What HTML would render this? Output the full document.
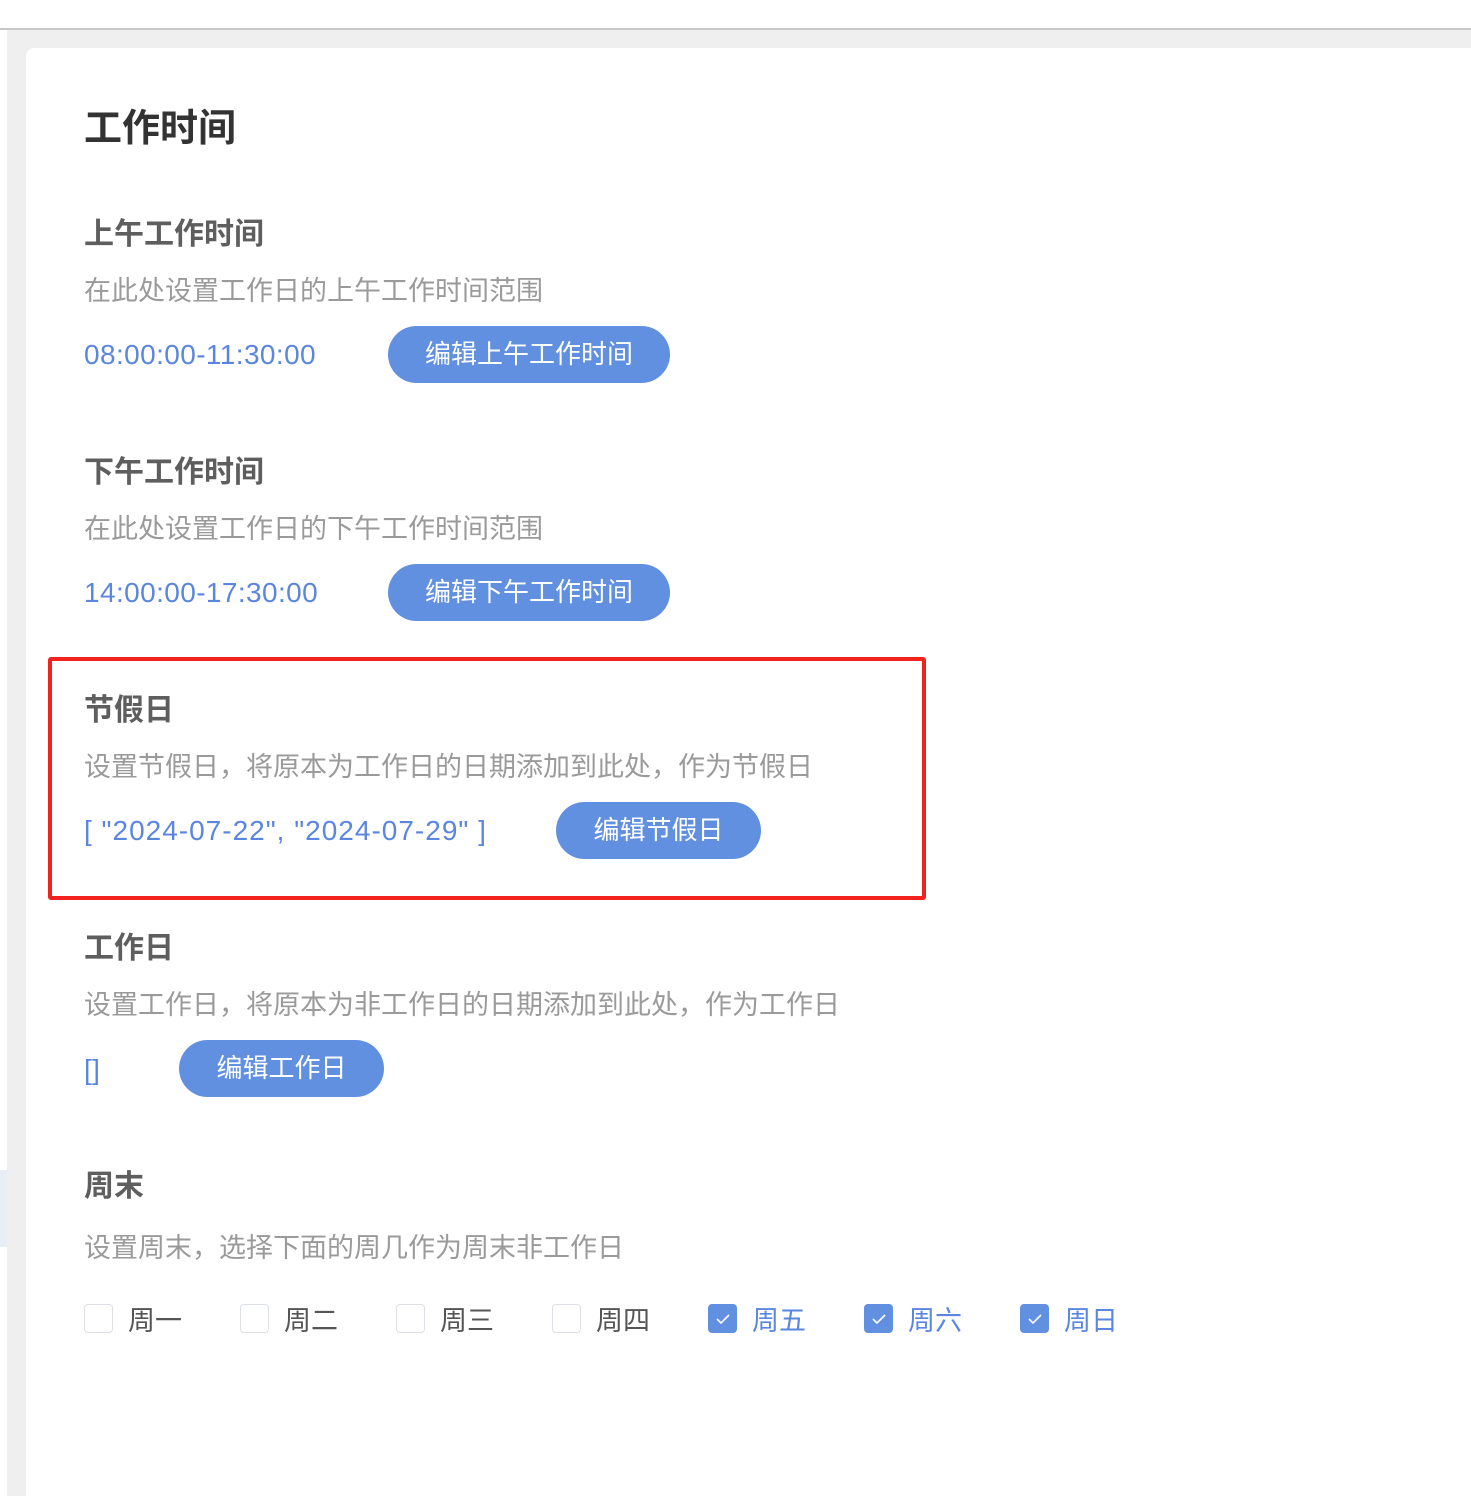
<!DOCTYPE html>
<html><head><meta charset="utf-8">
<style>
*{margin:0;padding:0;box-sizing:border-box}
body{width:1471px;height:1496px;position:relative;background:#fff;overflow:hidden;font-family:"Liberation Sans","Noto Sans CJK SC",sans-serif}
.topline{position:absolute;left:0;top:28px;width:1471px;height:2px;background:#c8c8c8}
.bg{position:absolute;left:7px;top:30px;width:1464px;height:1466px;background:#efefef}
.lstrip{position:absolute;left:0;top:1170px;width:7px;height:77px;background:#e9eef6}
.card{position:absolute;left:26px;top:48px;width:1460px;height:1460px;background:#fff;border-radius:8px}
.t{position:absolute;left:84px;white-space:nowrap}
.title{font-size:38px;font-weight:bold;color:#333;line-height:50px}
.h{font-size:30px;font-weight:bold;color:#5e5e5e;line-height:40px}
.d{font-size:27px;color:#9a9a9a;line-height:36px}
.v{font-size:28px;color:#5b86e0;line-height:36px;letter-spacing:0.4px}
.btn{position:absolute;height:57px;border-radius:29px;background:#6290e0;color:#fff;font-size:26px;line-height:57px;text-align:center}
.red{position:absolute;left:48px;top:657px;width:878px;height:243px;border:4px solid #f2221c;border-radius:3px}
.cb{position:absolute;top:1304px;width:29px;height:29px;border:1px solid #dcdfe6;border-radius:4px;background:#fff}
.cb.on{background:#6290e0;border-color:#6290e0}
.cb svg{position:absolute;left:6px;top:7px}
.lb{position:absolute;top:1302px;font-size:27px;line-height:38px;color:#555;white-space:nowrap}
.lb.on{color:#5b86e0}
</style></head><body>
<div class="topline"></div>
<div class="bg"></div>
<div class="lstrip"></div>
<div class="card"></div>

<div class="t title" style="top:104px">工作时间</div>

<div class="t h" style="top:215px">上午工作时间</div>
<div class="t d" style="top:273px">在此处设置工作日的上午工作时间范围</div>
<div class="t v" style="top:337px">08:00:00-11:30:00</div>
<div class="btn" style="left:388px;top:326px;width:282px">编辑上午工作时间</div>

<div class="t h" style="top:453px">下午工作时间</div>
<div class="t d" style="top:511px">在此处设置工作日的下午工作时间范围</div>
<div class="t v" style="top:575px">14:00:00-17:30:00</div>
<div class="btn" style="left:388px;top:564px;width:282px">编辑下午工作时间</div>

<div class="red"></div>
<div class="t h" style="top:691px">节假日</div>
<div class="t d" style="top:749px">设置节假日，将原本为工作日的日期添加到此处，作为节假日</div>
<div class="t v" style="top:813px;letter-spacing:1px">[ "2024-07-22", "2024-07-29" ]</div>
<div class="btn" style="left:556px;top:802px;width:205px">编辑节假日</div>

<div class="t h" style="top:929px">工作日</div>
<div class="t d" style="top:987px">设置工作日，将原本为非工作日的日期添加到此处，作为工作日</div>
<div class="t v" style="top:1052px">[]</div>
<div class="btn" style="left:179px;top:1040px;width:205px">编辑工作日</div>

<div class="t h" style="top:1167px">周末</div>
<div class="t d" style="top:1230px">设置周末，选择下面的周几作为周末非工作日</div>

<div class="cb" style="left:84px"></div><div class="lb" style="left:128px">周一</div>
<div class="cb" style="left:240px"></div><div class="lb" style="left:284px">周二</div>
<div class="cb" style="left:396px"></div><div class="lb" style="left:440px">周三</div>
<div class="cb" style="left:552px"></div><div class="lb" style="left:596px">周四</div>
<div class="cb on" style="left:708px"><svg width="16" height="14" viewBox="0 0 16 14"><path d="M2 7 L6 11 L14 3" stroke="#fff" stroke-width="1.6" fill="none"/></svg></div><div class="lb on" style="left:752px">周五</div>
<div class="cb on" style="left:864px"><svg width="16" height="14" viewBox="0 0 16 14"><path d="M2 7 L6 11 L14 3" stroke="#fff" stroke-width="1.6" fill="none"/></svg></div><div class="lb on" style="left:908px">周六</div>
<div class="cb on" style="left:1020px"><svg width="16" height="14" viewBox="0 0 16 14"><path d="M2 7 L6 11 L14 3" stroke="#fff" stroke-width="1.6" fill="none"/></svg></div><div class="lb on" style="left:1064px">周日</div>
</body></html>
